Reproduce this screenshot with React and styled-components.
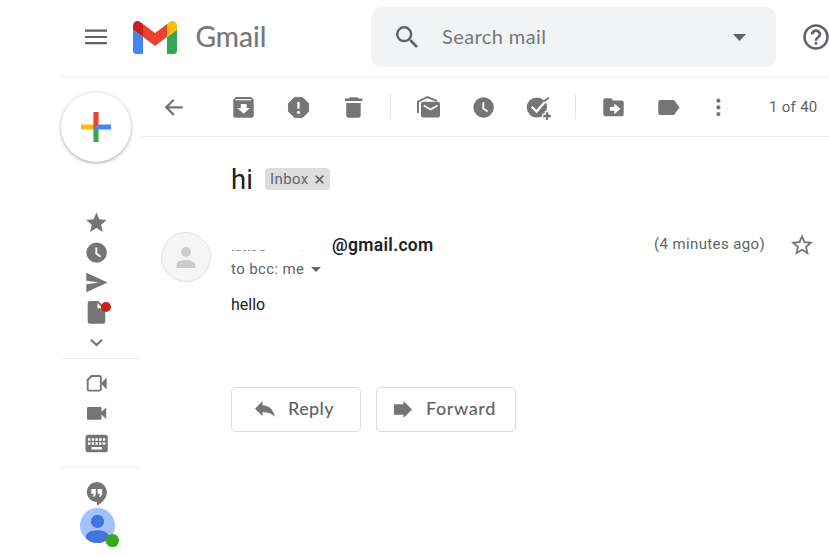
import React from "react";
import styled, { createGlobalStyle } from "styled-components";

const GREY = "#757575";
const LINE = "#e9eeed";

const Global = createGlobalStyle`
  * { box-sizing: border-box; }
  html, body { margin: 0; background: #fff; }
  body { overflow: hidden; font-family: Roboto, "Liberation Sans", sans-serif; }
  svg { display: block; flex: none; }
`;

const Page = styled.div`
  width: 829px;
  height: 557px;
  padding-left: 61px;
  overflow: hidden;
  display: flex;
  flex-direction: column;
`;

const Header = styled.header`
  height: 77px;
  flex: none;
  border-bottom: 1px solid ${LINE};
  display: flex;
  align-items: flex-start;
`;

const HeaderIcon = styled.div`
  margin-left: ${(p) => p.$left}px;
  margin-top: ${(p) => p.$top}px;
  flex: none;
`;

const SearchBox = styled.div`
  width: 405px;
  height: 60px;
  flex: none;
  margin: 7px 0 0 104px;
  padding: 0 30px 0 25px;
  border-radius: 10px;
  background: #f1f3f4;
  display: flex;
  align-items: center;
`;

const SearchLabel = styled.span`
  flex: 1;
  margin-left: 24px;
  padding-bottom: 2px;
  font: 400 20px/24px Lato, sans-serif;
  letter-spacing: 0.4px;
  color: #74787c;
`;

const Body = styled.div`
  flex: 1;
  display: flex;
  min-height: 0;
`;

const Sidebar = styled.nav`
  width: 81px;
  flex: none;
  display: flex;
  flex-direction: column;
`;

const Compose = styled.div`
  width: 70px;
  height: 70px;
  flex: none;
  margin: 15px 0 46px 0;
  border-radius: 50%;
  background: #fff;
  box-shadow: 0 1px 3px rgba(60, 64, 67, 0.36), 0 1px 4px rgba(60, 64, 67, 0.14);
  display: grid;
  place-items: center;
`;

const NavGroup = styled.div`
  width: 80px;
  flex: none;
  padding: ${(p) => p.$pad || "0"};
  padding-left: 20px;
  border-bottom: ${(p) => (p.$last ? "none" : `1px solid ${LINE}`)};
`;

const ProfileWrap = styled.div`
  margin: -1px 0 0 19px;
`;

const Main = styled.main`
  flex: 1;
  min-width: 0;
`;

const Toolbar = styled.div`
  height: 60px;
  padding-left: 17px;
  border-bottom: 1px solid ${LINE};
  display: flex;
  align-items: center;
`;

const Group = styled.div`
  display: flex;
  gap: 25px;
  margin-left: ${(p) => p.$left}px;
`;

const Separator = styled.div`
  width: 1px;
  height: 25px;
  margin-left: 22px;
  background: #e4e6e6;
`;

const Counter = styled.span`
  margin-left: 36px;
  font-size: 15px;
  line-height: 20px;
  letter-spacing: 0.3px;
  color: #5f6368;
  white-space: nowrap;
`;

const SubjectRow = styled.div`
  display: flex;
  align-items: center;
  height: 34px;
  margin: 25px 0 0 89px;
`;

const Subject = styled.h1`
  margin: 2px 0 0;
  width: 34px;
  font-weight: 400;
  font-size: 27.5px;
  line-height: 34px;
  color: #202124;
`;

const Chip = styled.span`
  width: 65px;
  height: 22px;
  padding: 0 6px 0 5px;
  border-radius: 4px;
  background: #ddd;
  color: #666;
  font-size: 15px;
  letter-spacing: 0.4px;
  display: flex;
  align-items: center;
  justify-content: space-between;
`;

const Message = styled.article`
  display: flex;
  align-items: flex-start;
  margin: 36px 0 0 19px;
`;

const Avatar = styled.div`
  width: 50px;
  height: 50px;
  flex: none;
  border-radius: 50%;
  border: 1px solid #e0e0e0;
  background: #f5f5f5;
  display: grid;
  place-items: center;
`;

const Content = styled.div`
  flex: 1;
  margin-left: 20px;
`;

const SenderRow = styled.div`
  display: flex;
  height: 24px;
  align-items: center;
`;

const Sender = styled.span`
  width: 322px;
  margin-left: 1px;
  padding-top: 2px;
  font-size: 17.5px;
  font-weight: 600;
  line-height: 24px;
  letter-spacing: 0.3px;
  color: #202124;
`;

const Time = styled.span`
  width: 132px;
  font-size: 15px;
  letter-spacing: 0.38px;
  color: #5f6368;
  white-space: nowrap;
`;

const Recipient = styled.div`
  display: flex;
  align-items: center;
  gap: 7px;
  margin-top: 3px;
  font-size: 15px;
  line-height: 20px;
  letter-spacing: 0.38px;
  color: #5f6368;
`;

const Text = styled.p`
  margin: 15px 0 0;
  font-size: 16px;
  line-height: 22px;
  color: #222;
`;

const Actions = styled.div`
  display: flex;
  gap: 15px;
  margin-top: 71px;
`;

const Button = styled.button`
  width: ${(p) => p.$width}px;
  height: 45px;
  padding: 0 0 0 ${(p) => p.$pad}px;
  border: 1px solid #dadce0;
  border-radius: 5px;
  background: #fff;
  display: flex;
  align-items: center;
  gap: ${(p) => p.$gap}px;
  font: 500 18px/22px Lato, sans-serif;
  letter-spacing: ${(p) => p.$spacing}px;
  color: #5f6368;
`;

const ButtonLabel = styled.span`
  padding-bottom: 3px;
`;

const StarSlot = styled.div`
  flex: none;
  margin: 2px 16px 0 0;
`;

const Cell = ({ children }) => (
  <svg width="30" height="30" viewBox="0 0 30 30" fill={GREY}>
    {children}
  </svg>
);

const White = { fill: "none", stroke: "#fff" };

const Clock = ({ cy = 15.5 }) => (
  <Cell>
    <circle cx="15.6" cy={cy} r="10.2" />
    <path d={`M15.3 ${cy - 5.2}v6.2l4.3 3.1`} {...White} strokeWidth="1.9" />
  </Cell>
);

const Caret = ({ w, h, color }) => (
  <svg width={w} height={h} viewBox="0 0 12 6" preserveAspectRatio="none" fill={color}>
    <path d="M0 0h12L6 6z" />
  </svg>
);

const GmailMark = () => (
  <svg width="44" height="33" viewBox="52 42 88 66">
    <path fill="#4285f4" d="M58 108h14V74L52 59v43c0 3.32 2.69 6 6 6" />
    <path fill="#34a853" d="M120 108h14c3.32 0 6-2.69 6-6V59l-20 15" />
    <path fill="#fbbc04" d="M120 48v26l20-15v-8c0-7.42-8.47-11.65-14.4-7.2" />
    <path fill="#ea4335" d="M72 74V48l24 18 24-18v26L96 92" />
    <path fill="#c5221f" d="M52 51v8l20 15V48l-5.6-4.2c-5.94-4.45-14.4-.22-14.4 7.2" />
  </svg>
);

export default function App() {
  return (
    <Page>
      <Global />
      <Header>
        <HeaderIcon $left={24} $top={29}>
          <svg width="22" height="16" viewBox="0 0 22 16" fill="#5f6368">
            <path d="M0 .6h22v2.1H0zM0 7h22v2.1H0zM0 13.1h22v2.1H0z" />
          </svg>
        </HeaderIcon>
        <HeaderIcon $left={26} $top={20.5}>
          <GmailMark />
        </HeaderIcon>
        <HeaderIcon $left={18} $top={20}>
          <svg width="72" height="36" viewBox="0 0 72 36">
            <text x="0.5" y="27.4" textLength="71" lengthAdjust="spacingAndGlyphs" fontFamily="Lato" fontSize="28.5" fill="#74777c" stroke="#74777c" strokeWidth="0.2">Gmail</text>
          </svg>
        </HeaderIcon>
        <SearchBox>
          <svg width="22" height="22" viewBox="3 3 17.5 17.5" fill="#5f6368">
            <path d="M15.5 14h-.79l-.28-.27A6.47 6.47 0 0 0 16 9.5 6.5 6.5 0 1 0 9.5 16c1.61 0 3.09-.59 4.23-1.57l.27.28v.79l5 4.99L20.49 19zm-6 0C7.01 14 5 11.99 5 9.5S7.01 5 9.5 5 14 7.01 14 9.5 11.99 14 9.5 14" />
          </svg>
          <SearchLabel>Search mail</SearchLabel>
          <Caret w={13} h={7} color="#5f6368" />
        </SearchBox>
        <HeaderIcon $left={27} $top={24}>
          <svg width="26" height="26" viewBox="1.8 1.8 20.4 20.4" fill="#5f6368">
            <path d="M11 18h2v-2h-2zm1-16C6.48 2 2 6.48 2 12s4.48 10 10 10 10-4.48 10-10S17.52 2 12 2m0 18c-4.41 0-8-3.59-8-8s3.59-8 8-8 8 3.59 8 8-3.59 8-8 8m0-14c-2.21 0-4 1.79-4 4h2c0-1.1.9-2 2-2s2 .9 2 2c0 2-3 1.75-3 5h2c0-2.25 3-2.5 3-5 0-2.21-1.79-4-4-4" />
          </svg>
        </HeaderIcon>
      </Header>
      <Body>
        <Sidebar>
          <Compose>
            <svg width="30" height="30" viewBox="0 0 30 30">
              <path fill="#fbbc04" d="M0 12.4h12.4L15 15l-2.6 2.6H0z" />
              <path fill="#34a853" d="M12.4 17.6L15 15l2.6 2.6V30h-5.2z" />
              <path fill="#ea4335" d="M12.4 0h5.2v12.4l-5.2 5.2z" />
              <path fill="#4285f4" d="M17.6 12.4H30v5.2H12.4z" />
            </svg>
          </Compose>
          <NavGroup>
            <Cell>
              <path transform="translate(3.2 2.5) scale(1.02)" d="M12 17.27L18.18 21l-1.64-7.03L22 9.24l-7.19-.61L12 2 9.19 8.63 2 9.24l5.46 4.73L5.82 21z" />
            </Cell>
            <Clock cy={14.6} />
            <Cell>
              <path d="M5.3 4.7l21.2 9.8-21.2 9.8v-8.1L18 14.5 5.3 12.8z" />
            </Cell>
            <Cell>
              <path d="M8.7 3h8.6l7 6.5v14.2a2 2 0 0 1-2 2H8.7a2 2 0 0 1-2-2V5a2 2 0 0 1 2-2" />
              <path d="M16.5 5v5.3h5.3z" fill="#fff" />
              <circle cx="25" cy="9" r="5" fill="#c5221f" />
            </Cell>
            <Cell>
              <path d="M10 11.8l5.5 5.2 5.5-5.2" fill="none" stroke={GREY} strokeWidth="2.2" />
            </Cell>
          </NavGroup>
          <NavGroup $pad="10px 0 8px">
            <Cell>
              <path d="M10.5 7h8a1.3 1.3 0 0 1 1.3 1.3v12a1.3 1.3 0 0 1-1.3 1.3H8A1.3 1.3 0 0 1 6.7 20.3V11z" fill="none" stroke={GREY} strokeWidth="1.9" />
              <path d="M20 14.5l5.7-6v12z" />
            </Cell>
            <Cell>
              <path d="M7 8h12.5a1 1 0 0 1 1 1v3.8l4.7-4.2V20l-4.700-4.200v3.900a1 1 0 0 1-1 1H7a1 1 0 0 1-1-1V9a1 1 0 0 1 1-1" />
            </Cell>
            <Cell>
              <rect x="4.5" y="5.7" width="22.3" height="17.6" rx="2.5" />
              <path d="M7 9.3h2.4v2.4H7zm3.7 0h2.4v2.4h-2.4zm3.7 0h2.4v2.4h-2.4zm3.7 0h2.4v2.4h-2.4zm3.7 0h2.4v2.4h-2.4zM7 13.3h2.4v2.4H7zm3.7 0h2.4v2.4h-2.4zm3.7 0h2.4v2.4h-2.4zm3.7 0h2.4v2.4h-2.4zm3.7 0h2.4v2.4h-2.4zM10.5 18H21v2.4H10.5z" fill="#fff" />
            </Cell>
          </NavGroup>
          <NavGroup $pad="11px 0 0" $last>
            <Cell>
              <path d="M15.7 3a10.1 10.1 0 0 1 10.2 10.1c0 5.6-4.3 10.8-9.9 13.6v-3.5A10.1 10.1 0 1 1 15.7 3" />
              <path d="M10.3 10h4.5v5.4l-1.6 2.4h-1.6l1.4-3h-2.7zM16.6 10h4.5v5.4l-1.6 2.4h-1.6l1.4-3h-2.7z" fill="#fff" />
            </Cell>
          </NavGroup>
          <ProfileWrap>
            <svg width="40" height="40" viewBox="0 0 40 40">
              <defs>
                <clipPath id="profile"><circle cx="17.5" cy="17.5" r="17.5" /></clipPath>
              </defs>
              <circle cx="17.5" cy="17.5" r="17.5" fill="#a0c3ff" />
              <g clipPath="url(#profile)" fill="#4374e0">
                <circle cx="17.5" cy="13.4" r="6.6" />
                <path d="M6 35v-6.5c0-4.3 6-6.3 11.5-6.3s11.3 2 11.3 6.3V35z" />
              </g>
              <circle cx="32.4" cy="32.5" r="6.6" fill="#34a81f" />
            </svg>
          </ProfileWrap>
        </Sidebar>
        <Main>
          <Toolbar>
            <Cell>
              <path d="M14.8 7.7l-7.6 7.6 7.6 7.6M7.2 15.3h16.5" fill="none" stroke={GREY} strokeWidth="2.2" />
            </Cell>
            <Group $left={39}>
              <Cell>
                <path d="M7.8 5h15.4l2.5 2.8v15.4a2.5 2.5 0 0 1-2.5 2.5H7.8a2.5 2.5 0 0 1-2.5-2.5V7.8z" />
                <path d="M7.6 7.7h15.8" {...White} strokeWidth="1.2" />
                <path d="M12.8 12h5.8v4H22l-6.3 5.7L9.3 16h3.5z" fill="#fff" />
              </Cell>
              <Cell>
                <g transform="translate(1.7 1.7) scale(1.15)">
                  <path d="M15.5 3.2h-7L3.3 8.5v7l5.2 5.3h7l5.3-5.3v-7z" stroke={GREY} strokeWidth=".8" strokeLinejoin="round" />
                  <path d="M11 7h2v6h-2z" fill="#fff" />
                  <circle cx="12" cy="16.2" r="1.35" fill="#fff" />
                </g>
              </Cell>
              <Cell>
                <path d="M12 5.3h7.5l1 1.3h3.8V9H7V6.6h4zM8.3 11h14.4v12.2a2.5 2.5 0 0 1-2.5 2.5h-9.4a2.5 2.5 0 0 1-2.5-2.5z" />
              </Cell>
            </Group>
            <Separator />
            <Group $left={22}>
              <Cell>
                <path d="M5 21V9.7L14.3 5l9.7 3.8" fill="none" stroke={GREY} strokeWidth="1.9" />
                <rect x="8" y="9.7" width="19" height="15.8" rx="2" />
                <path d="M10.7 13.5l6.9 4 6.9-4" {...White} strokeWidth="1.7" />
              </Cell>
              <Clock />
              <Cell>
                <g transform="translate(1.2 0)">
                  <circle cx="12.7" cy="15.5" r="10.1" />
                  <path d="M21.5 9l5-5" {...White} strokeWidth="4" />
                  <path d="M7.5 14.8l4.8 4.7L22.8 7.5" {...White} strokeWidth="2.3" />
                  <path d="M19.8 9.2l4.7-3.5" fill="none" stroke={GREY} strokeWidth="2" />
                  <path d="M23 19v10M18 24h10" {...White} strokeWidth="5" />
                  <path d="M22.9 20.2v7.6M19.1 24h7.6" fill="none" stroke={GREY} strokeWidth="2.3" />
                </g>
              </Cell>
            </Group>
            <Separator />
            <Group $left={22}>
              <Cell>
                <path d="M7.3 6.3h5.5l2.5 2.2h8.4a2 2 0 0 1 2 2v11.8a2 2 0 0 1-2 2H7.3a2 2 0 0 1-2-2v-14a2 2 0 0 1 2-2" />
                <path d="M12 14.9h4.3v-3.4l6.2 5.4-6.2 5.4v-3.5H12z" fill="#fff" />
              </Cell>
              <Cell>
                <path d="M7.5 8h12.3c1 0 1.5.4 2 1.1l4.7 6.4-4.7 6.4c-.5.7-1 1.1-2 1.1H7.5a2.2 2.2 0 0 1-2.2-2.2V10.2A2.2 2.2 0 0 1 7.5 8" />
              </Cell>
            </Group>
            <Group $left={20}>
              <Cell>
                <circle cx="15.4" cy="8.7" r="2.1" />
                <circle cx="15.4" cy="15.4" r="2.1" />
                <circle cx="15.4" cy="22.1" r="2.1" />
              </Cell>
            </Group>
            <Counter>1 of 40</Counter>
          </Toolbar>
          <SubjectRow>
            <Subject>hi</Subject>
            <Chip>
              Inbox
              <svg width="9" height="9" viewBox="0 0 9 9">
                <path d="M.8.8l7.4 7.4M8.2.8L.8 8.2" stroke="#666" strokeWidth="1.7" />
              </svg>
            </Chip>
          </SubjectRow>
          <Message>
            <Avatar>
              <svg width="20" height="22" viewBox="0 0 20 22" fill="#ccc">
                <circle cx="10" cy="6" r="5" />
                <path d="M.5 22v-3c0-3.3 5.5-5 9.5-5s9.5 1.7 9.5 5v3z" />
              </svg>
            </Avatar>
            <Content>
              <SenderRow>
                <svg width="100" height="24" viewBox="0 0 100 24">
                  <path d="M1 18.5h2M5 18.5h5M12 18.5h3M17 18.5h2M21 18.5h4M29 18.5h5" stroke="#999" strokeWidth="1" />
                  <path d="M69 18.5h1.5" stroke="#ccc" strokeWidth="1" />
                </svg>
                <Sender>@gmail.com</Sender>
                <Time>(4 minutes ago)</Time>
              </SenderRow>
              <Recipient>
                to bcc: me
                <Caret w={10} h={5} color="#666" />
              </Recipient>
              <Text>hello</Text>
              <Actions>
                <Button $width={130} $pad={23} $gap={13} $spacing={0.4}>
                  <svg width="20" height="17" viewBox="0 0 20 17" fill={GREY}>
                    <path d="M7.5 0v4.2C14.5 4.8 18.5 8.5 20 16c-3-3.7-7-4.8-12.5-4.8V15L0 7.7z" />
                  </svg>
                  <ButtonLabel>Reply</ButtonLabel>
                </Button>
                <Button $width={140} $pad={17} $gap={14} $spacing={0.6}>
                  <svg width="18" height="17" viewBox="0 0 18 17" fill={GREY}>
                    <path d="M0 3.2h9.5V0L18 8.5 9.5 17v-3.2H0z" />
                  </svg>
                  <ButtonLabel>Forward</ButtonLabel>
                </Button>
              </Actions>
            </Content>
            <StarSlot>
              <svg width="22" height="21" viewBox="2 2 20 19" fill={GREY}>
                <path d="M22 9.24l-7.19-.62L12 2 9.19 8.63 2 9.24l5.46 4.73L5.82 21 12 17.27 18.18 21l-1.63-7.03zM12 15.4l-3.76 2.27 1-4.28-3.32-2.88 4.38-.38L12 6.1l1.71 4.04 4.38.38-3.32 2.88 1 4.28z" />
              </svg>
            </StarSlot>
          </Message>
        </Main>
      </Body>
    </Page>
  );
}
